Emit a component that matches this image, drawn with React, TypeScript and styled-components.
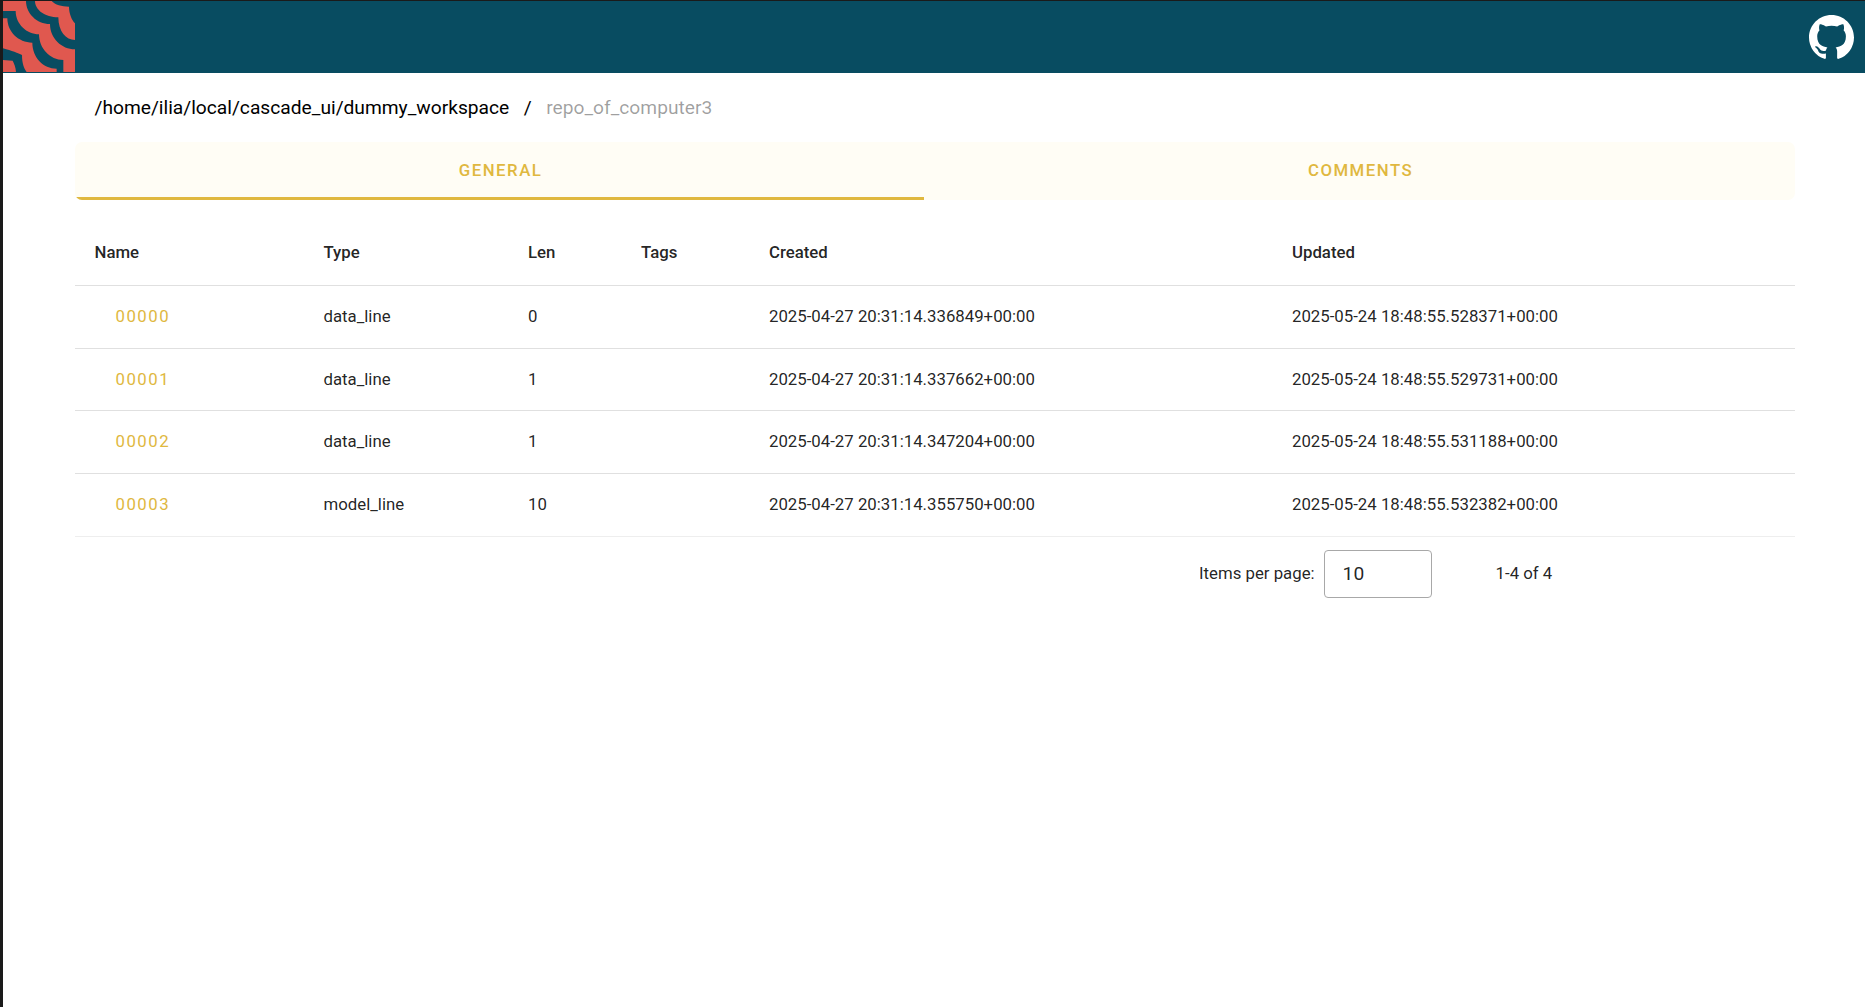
import React from 'react';
import styled, { createGlobalStyle } from 'styled-components';

const Global = createGlobalStyle`
  html, body { margin: 0; padding: 0; background: #fff; height: 100%; }
  #root { height: 100%; }
  body { font-family: Roboto, "Liberation Sans", sans-serif; color: rgba(0,0,0,.87); }
`;
const Frame = styled.div`
  min-height: 1007px; box-sizing: border-box; border-left: 3px solid #1a1a1a; border-top: 1px solid #1a1a1a; background: #fff;
`;
const Header = styled.header`
  height: 72px; background: #084c61; display: flex; align-items: center; justify-content: space-between;
`;
const LogoMark = styled.svg`
  width: 72px; height: 71px; display: block; align-self: flex-start;
`;
const HubLink = styled.a`
  display: flex; color: #fff; margin-right: 11px;
`;
const HubIcon = styled.svg`
  width: 45px; height: 45px; fill: currentColor; display: block;
`;
const Main = styled.main`
  padding: 0 70px 0 72px;
`;
const Crumbs = styled.nav`
  height: 69px; display: flex; align-items: center; padding-left: 19.5px; font-size: 19.2px; gap: 14.5px; box-sizing: border-box;
`;
const Crumb = styled.span<{ $current?: boolean }>`
  color: ${p => (p.$current ? 'rgba(0,0,0,.38)' : '#000')};
`;
const Tabs = styled.div`
  display: flex; height: 58px; background: #fffdf5; border-radius: 7px; overflow: hidden;
`;
const Tab = styled.div<{ $active?: boolean }>`
  flex: 1 1 auto; display: flex; align-items: center; justify-content: center; box-sizing: border-box;
  font-size: 16.8px; font-weight: 500; letter-spacing: 1.5px; color: #e0b83f; text-transform: uppercase;
  padding: 0 23px 0 25px;
  border-bottom: ${p => (p.$active ? '3px solid #e0b83f' : '0')};
  padding-bottom: ${p => (p.$active ? '0' : '3px')};
`;
const Table = styled.table`
  width: 100%; border-collapse: collapse; table-layout: fixed; margin-top: 24px; font-size: 16.8px;
`;
const HeadCell = styled.th`
  box-sizing: border-box; height: 61.5px; padding: 0 0 6px 19.5px; text-align: left; font-weight: 500; border-bottom: 1px solid #e0e0e0;
`;
const Cell = styled.td`
  box-sizing: border-box; height: 63px; padding: 0 0 3px 19.5px; border-bottom: 1px solid #e0e0e0;
  tr:nth-child(2) & { height: 62px; padding-bottom: 1px; }
  tr:last-child & { border-bottom-color: #eeeeee; }
`;
const NameLink = styled.a`
  color: #e0b83f; font-weight: 400; letter-spacing: 1.5px; padding-left: 21px;
`;
const Paginator = styled.div`
  display: flex; align-items: center; height: 72px; padding-left: 1124px; font-size: 16.8px;
`;
const PageLabel = styled.span`
  color: rgba(0,0,0,.87);
`;
const PageSize = styled.div`
  width: 108px; height: 48px; box-sizing: border-box; margin: 1px 0 0 9px; border: 1px solid #a8a8a8; border-radius: 4px;
  font-size: 19.2px; display: flex; align-items: center; padding-left: 18px;
`;
const Range = styled.span`
  margin-left: 64px;
`;

const rows = [
  ['00000', 'data_line', '0', '2025-04-27 20:31:14.336849+00:00', '2025-05-24 18:48:55.528371+00:00'],
  ['00001', 'data_line', '1', '2025-04-27 20:31:14.337662+00:00', '2025-05-24 18:48:55.529731+00:00'],
  ['00002', 'data_line', '1', '2025-04-27 20:31:14.347204+00:00', '2025-05-24 18:48:55.531188+00:00'],
  ['00003', 'model_line', '10', '2025-04-27 20:31:14.355750+00:00', '2025-05-24 18:48:55.532382+00:00'],
];
const widths = [229, 204.5, 113, 128, 523, 522.5];

export default function App() {
  return (
    <Frame>
      <Global />
      <Header>
        <LogoMark viewBox="9 3 216 213" aria-label="logo">
          <rect x="9" y="3" width="216" height="213" fill="#e0584f" />
          <g fill="#084c61">
            <path d="M155 3 C165 14 185 20 207 20 C207 40 215 60 225 70 L225 3 Z" />
            <path d="M78 3 C78 40 110 72 150 72 C150 115 185 148 225 148 L225 120 C198 120 175 95 175 52 C135 52 105 30 105 3 Z" />
            <path d="M9 33 L47 33 C47 72 80 103 117 103 C117 145 150 180 190 180 L190 216 L170 216 L170 206 C130 206 97 172 97 128 C55 128 22 95 22 55 L9 55 Z" />
            <path d="M9 145 C35 152 55 160 66 165 C66 190 72 205 80 216 L48 216 C47 200 42 190 38 182 L9 180 Z" />
          </g>
        </LogoMark>
        <HubLink>
          <HubIcon viewBox="0 0 16 16">
            <path d="M8 0c4.42 0 8 3.58 8 8a8.013 8.013 0 0 1-5.45 7.59c-.4.08-.55-.17-.55-.38 0-.27.01-1.13.01-2.2 0-.75-.25-1.23-.54-1.48 1.78-.2 3.65-.88 3.65-3.95 0-.88-.31-1.59-.82-2.15.08-.2.36-1.02-.08-2.12 0 0-.67-.22-2.2.82-.64-.18-1.32-.27-2-.27-.68 0-1.36.09-2 .27-1.53-1.03-2.2-.82-2.2-.82-.44 1.1-.16 1.92-.08 2.12-.51.56-.82 1.28-.82 2.15 0 3.06 1.86 3.75 3.64 3.95-.23.2-.44.55-.51 1.07-.46.21-1.61.55-2.33-.66-.15-.24-.6-.83-1.23-.82-.67.01-.27.38.01.53.34.19.73.9.82 1.13.16.45.68 1.31 2.69.94 0 .67.01 1.3.01 1.49 0 .21-.15.45-.55.38A7.995 7.995 0 0 1 0 8c0-4.42 3.58-8 8-8Z" />
          </HubIcon>
        </HubLink>
      </Header>
      <Main>
        <Crumbs>
          <Crumb>/home/ilia/local/cascade_ui/dummy_workspace</Crumb>
          <Crumb>/</Crumb>
          <Crumb $current>repo_of_computer3</Crumb>
        </Crumbs>
        <Tabs>
          <Tab $active>General</Tab>
          <Tab>Comments</Tab>
        </Tabs>
        <Table>
          <colgroup>{widths.map((w, i) => <col key={i} width={w} />)}</colgroup>
          <thead>
            <tr>
              {['Name', 'Type', 'Len', 'Tags', 'Created', 'Updated'].map(h => <HeadCell key={h}>{h}</HeadCell>)}
            </tr>
          </thead>
          <tbody>
            {rows.map(r => (
              <tr key={r[0]}>
                <Cell><NameLink>{r[0]}</NameLink></Cell>
                <Cell>{r[1]}</Cell>
                <Cell>{r[2]}</Cell>
                <Cell />
                <Cell>{r[3]}</Cell>
                <Cell>{r[4]}</Cell>
              </tr>
            ))}
          </tbody>
        </Table>
        <Paginator>
          <PageLabel>Items per page:</PageLabel>
          <PageSize>10</PageSize>
          <Range>1-4 of 4</Range>
        </Paginator>
      </Main>
    </Frame>
  );
}
